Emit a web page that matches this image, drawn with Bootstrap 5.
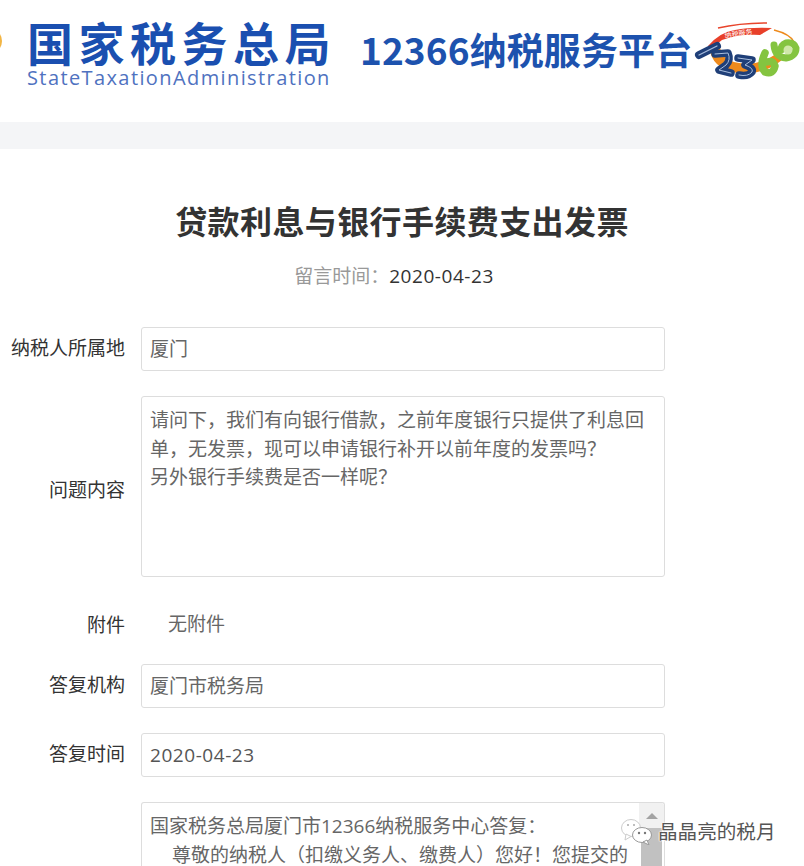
<!DOCTYPE html>
<html lang="zh-CN">
<head>
<meta charset="UTF-8">
<title>贷款利息与银行手续费支出发票</title>
<link href="https://cdn.jsdelivr.net/npm/bootstrap@5.3.0/dist/css/bootstrap.min.css" rel="stylesheet">
<style>
body { font-family: "Liberation Sans", "Noto Sans CJK SC", sans-serif; color: #333; height: 866px; overflow: hidden; background: #fff; }
.top-head { height: 122px; overflow: hidden; padding-top: 10px; }
.logo-sun { width: 27px; height: 50px; margin-top: 6px; flex-shrink: 0; }
.logo-left { width: 306px; margin-top: 6px; flex-shrink: 0; }
.logo-cn { font-family: "Noto Sans CJK SC", sans-serif; font-weight: 700; font-size: 46px; line-height: 50px; color: #1a4fb0; letter-spacing: 5.5px; white-space: nowrap; }
.logo-en { font-family: "Open Sans", sans-serif; font-size: 20px; line-height: 24px; color: #4f72c0; letter-spacing: 1.4px; white-space: nowrap; }
.logo-title { font-family: "Noto Sans CJK SC", sans-serif; font-weight: 700; font-size: 37px; letter-spacing: .1px; line-height: 46px; color: #1d52ae; white-space: nowrap; width: 330px; margin-left: 27px; margin-top: 16px; flex-shrink: 0; }
.logo-mark { flex-shrink: 0; }
.grey-band { height: 27px; background: #f4f5f7; }
.page-title { font-family: "Noto Sans CJK SC", sans-serif; font-size: 32px; font-weight: 700; letter-spacing: .4px; line-height: 44px; color: #333; margin: 0; padding-top: 49px; }
.msg-time { font-family: "Noto Sans CJK SC", sans-serif; font-size: 19px; line-height: 26px; color: #999; margin-top: 20px; margin-bottom: 38px; padding-right: 16px; }
.msg-time span { color: #333; font-family: "Open Sans", sans-serif; letter-spacing: .55px; }
.form-line { display: flex; align-items: center; margin-bottom: 25px; }
.form-lbl { width: 125px; text-align: right; font-family: "Noto Sans CJK SC", sans-serif; font-size: 19px; color: #333; flex-shrink: 0; margin-right: 16px; white-space: nowrap; }
.lbl-low { padding-top: 5px; }
.lbl-up { padding-bottom: 3px; }
.form-val { width: 524px; font-family: "Open Sans", "Noto Sans CJK SC", sans-serif; font-size: 19px; line-height: 28.5px; color: #666; border: 1px solid #ddd; border-radius: 3px; padding: 7px 8px; height: 44px; background: #fff; }
.val-date { letter-spacing: .55px; color: #555; }
.form-area { height: 181px; padding-top: 9px; }
.line-plain { margin-bottom: 18px; }
.form-plain { border: 0; padding-left: 27px; font-family: "Noto Sans CJK SC", sans-serif; }
.form-tall { height: 64px; padding-top: 9px; position: relative; overflow: hidden; border-bottom: 0; border-radius: 3px 3px 0 0; }
.ans-indent { padding-left: 22px; white-space: nowrap; }
.scroll-rail { position: absolute; right: 0; top: 0; bottom: 0; width: 25px; }
.scroll-top { height: 25px; background: #f1f1f1; display: flex; justify-content: center; padding-top: 10px; }
.scroll-arrow { width: 0; height: 0; border-left: 6px solid transparent; border-right: 6px solid transparent; border-bottom: 6px solid #a3a3a3; }
.scroll-thumb { position: absolute; top: 25px; left: 2px; width: 21px; bottom: 0; background: #c1c1c1; }
.wm { position: absolute; left: 621px; top: 817px; color: #555; font-family: "Noto Sans CJK SC", sans-serif; font-size: 19.6px; line-height: 28px; text-shadow: 0 0 2px #fff, 0 0 2px #fff, 0 0 2px #fff; }
.wm-icon { margin-right: 5px; }
</style>
</head>
<body class="position-relative">

<div class="top-head d-flex align-items-start">
  <svg class="logo-sun" viewBox="0 0 27 50"><circle cx="-11" cy="25" r="13" fill="#f2b544"/></svg>
  <div class="logo-left">
    <div class="logo-cn">国家税务总局</div>
    <div class="logo-en">StateTaxationAdministration</div>
  </div>
  <div class="logo-title">12366纳税服务平台</div>
  <svg class="logo-mark" width="114" height="80" viewBox="0 0 114 80">
    <path d="M84 20 Q100 24 104 32" stroke="#ee8a1c" stroke-width="1.5" fill="none"/>
    <path d="M28 18 Q50 13 77 13" stroke="#e8452c" stroke-width="1.5" fill="none"/>
    <path d="M18 36 Q30 22 45 20 Q60 17 82 18 L70 25 Q48 24 32 30 L22 38Z" fill="#e8402a"/>
    <text x="35" y="28" font-size="7" fill="#fff" font-family="Noto Sans CJK SC, sans-serif" transform="rotate(-8 35 28)">纳税服务</text>
    <path d="M20 40 Q22 56 42 62 Q70 68 92 50 L86 44 Q66 58 44 52 Q32 48 30 38Z" fill="#ee8a1c"/>
    <g fill="none" stroke-linecap="round" stroke-linejoin="round">
      <path d="M9 45 L27 36" stroke="#1f3f78" stroke-width="8"/>
      <path d="M25 44 L38 43 Q41 50 36 55 L29 60 L41 63" stroke="#1f3f78" stroke-width="7.5"/>
      <path d="M48 48 L62 50 L55 55 Q64 58 62 62 Q58 67 49 65" stroke="#1f3f78" stroke-width="7.5"/>
      <path d="M9 45 L27 36" stroke="#a9bedd" stroke-width="1.2"/>
      <path d="M25 44 L38 43 Q41 50 36 55 L29 60 L41 63" stroke="#a9bedd" stroke-width="1"/>
      <path d="M48 48 L62 50 L55 55 Q64 58 62 62 Q58 67 49 65" stroke="#a9bedd" stroke-width="1"/>
      <path d="M75 43 Q69 56 75 62 Q83 65 85 56 Q83 50 77 52" stroke="#84c440" stroke-width="7.5"/>
      <path d="M84 35 Q85 47 96 48 Q106 46 106 38 Q104 32 96 33 Q91 35 91 40" stroke="#84c440" stroke-width="7"/>
    </g>
    <circle cx="98" cy="40" r="4.5" fill="#cfe8a8"/>
  </svg>
</div>
<div class="grey-band"></div>

<h1 class="page-title text-center">贷款利息与银行手续费支出发票</h1>
<div class="msg-time text-center">留言时间：<span>2020-04-23</span></div>

<div class="form-line">
  <div class="form-lbl lbl-up">纳税人所属地</div>
  <div class="form-val">厦门</div>
</div>
<div class="form-line">
  <div class="form-lbl lbl-low">问题内容</div>
  <div class="form-val form-area">请问下，我们有向银行借款，之前年度银行只提供了利息回单，无发票，现可以申请银行补开以前年度的发票吗？<br>另外银行手续费是否一样呢？</div>
</div>
<div class="form-line line-plain">
  <div class="form-lbl">附件</div>
  <div class="form-val form-plain">无附件</div>
</div>
<div class="form-line">
  <div class="form-lbl lbl-up">答复机构</div>
  <div class="form-val">厦门市税务局</div>
</div>
<div class="form-line">
  <div class="form-lbl lbl-up">答复时间</div>
  <div class="form-val val-date">2020-04-23</div>
</div>
<div class="form-line align-items-start mb-0">
  <div class="form-lbl"></div>
  <div class="form-val form-tall">
    <div>国家税务总局厦门市12366纳税服务中心答复：</div>
    <div class="ans-indent">尊敬的纳税人（扣缴义务人、缴费人）您好！您提交的</div>
    <div class="scroll-rail">
      <div class="scroll-top"><div class="scroll-arrow"></div></div>
      <div class="scroll-thumb"></div>
    </div>
  </div>
</div>

<div class="wm d-flex align-items-center">
  <svg class="wm-icon" width="32" height="28" viewBox="0 0 32 28">
    <ellipse cx="10" cy="11" rx="9.5" ry="8.5" fill="#fff" stroke="#ccc"/>
    <path d="M5 17 L4 23 L10 19.5Z" fill="#fff" stroke="#ccc"/>
    <ellipse cx="21" cy="18" rx="9.5" ry="7.5" fill="#fff" stroke="#999"/>
    <path d="M26 23 L28 28 L22 25Z" fill="#fff" stroke="#999"/>
    <circle cx="18" cy="16" r="1.2" fill="#777"/><circle cx="24" cy="16" r="1.2" fill="#777"/>
    <circle cx="7" cy="8" r="1" fill="#aaa"/><circle cx="13" cy="8" r="1" fill="#aaa"/>
  </svg>
  <span>晶晶亮的税月</span>
</div>

<script src="https://cdn.jsdelivr.net/npm/bootstrap@5.3.0/dist/js/bootstrap.bundle.min.js"></script>
</body>
</html>
